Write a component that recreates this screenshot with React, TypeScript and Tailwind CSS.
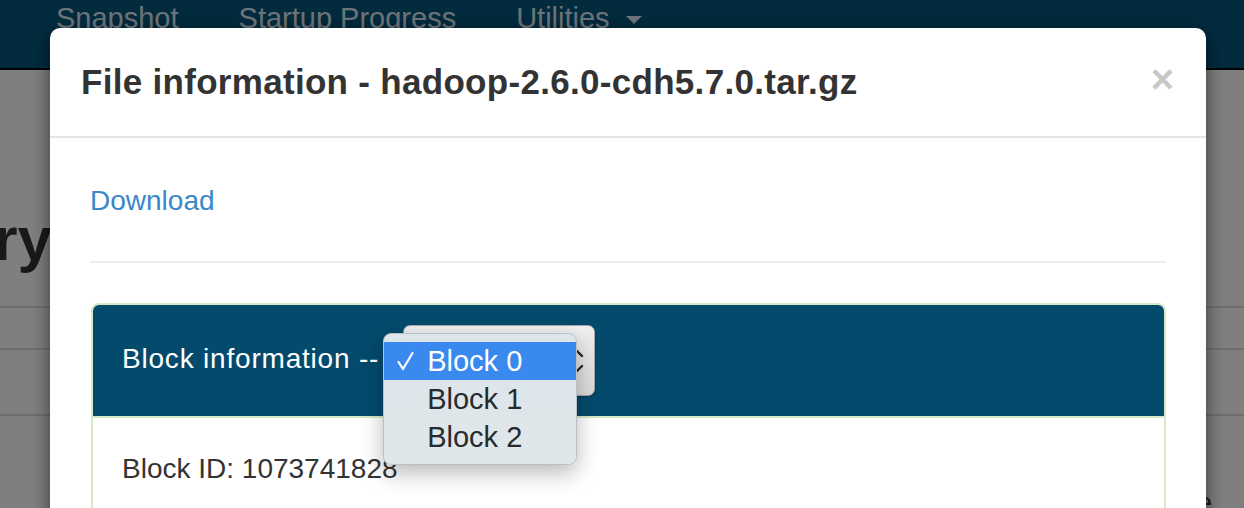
const font = { fontFamily: "'Liberation Sans', Arial, sans-serif" }

function PageBehind() {
  return (
    <div className="absolute inset-0 bg-white">
      <nav className="h-[70px] bg-[#05567c] border-b-2 border-black">
        <ul className="flex pl-[26px] pt-[4px] text-[29px] leading-none text-[#dde8f0]">
          <li className="px-[30px]">Snapshot</li>
          <li className="px-[30px]">Startup Progress</li>
          <li className="px-[30px] flex items-start gap-[16px]">
            Utilities
            <span className="mt-[12px] w-0 h-0 border-l-[8px] border-r-[8px] border-t-[8px] border-l-transparent border-r-transparent border-t-[#dde8f0]" />
          </li>
        </ul>
      </nav>
      <div className="pt-[138px] w-[52px] flex justify-end">
        <h1 className="text-[62px] font-bold leading-none text-[#333] whitespace-nowrap">Browse Directory</h1>
      </div>
      <div className="mt-[36px] border-t-2 border-[#dddddd]" />
      <div className="h-[40px]" />
      <div className="border-t-2 border-[#dddddd]" />
      <div className="h-[64px]" />
      <div className="border-t-2 border-[#dddddd]" />
      <div className="flex justify-end pr-[32px] pt-[66px] text-[28px] text-[#333]">File name</div>
      <div className="absolute inset-0 bg-black/50" />
    </div>
  )
}

function BlockSelect() {
  return (
    <div className="relative ml-[24px] w-[192px] h-[71px]">
      <div className="h-full rounded-[7px] border border-[#a9a9a9] bg-gradient-to-b from-[#f0f0f0] to-[#d9d9d9] shadow-[0_1px_2px_rgba(0,0,0,0.3)] flex items-center justify-end pr-[10px]">
        <svg width="14" height="28" viewBox="0 0 14 28" fill="none" stroke="#222" strokeWidth="2.4" strokeLinecap="round" strokeLinejoin="round">
          <path d="M2 9 L7 4 L12 9" />
          <path d="M2 19 L7 24 L12 19" />
        </svg>
      </div>
      <div className="absolute left-[-20px] top-[8px] w-[194px] rounded-[8px] border border-[#b8c1c6] bg-gradient-to-b from-[#dbe5ea] to-[#e0e7ea] shadow-[0_8px_22px_rgba(0,0,0,0.28)] py-[8px] text-[29px] leading-[38px]">
        <div className="flex items-center h-[38px] bg-[#3a89ef] text-white">
          <svg className="ml-[13px] mr-[13px]" width="17" height="20" viewBox="0 0 17 20" fill="none" stroke="white" strokeWidth="2.2" strokeLinecap="round" strokeLinejoin="round">
            <path d="M1.5 11 L6 18 L15.5 2" />
          </svg>
          <span>Block 0</span>
        </div>
        <div className="h-[38px] pl-[43px] text-[#262b2e]">Block 1</div>
        <div className="h-[38px] pl-[43px] text-[#262b2e]">Block 2</div>
      </div>
    </div>
  )
}

export default function App() {
  return (
    <div className="relative w-[1244px] h-[508px] overflow-hidden" style={font}>
      <PageBehind />

      <div className="absolute left-[50px] top-[28px] w-[1156px] h-[520px] bg-white rounded-[10px] shadow-[0_5px_18px_rgba(0,0,0,0.55)]">
        <div className="h-[110px] border-b-2 border-[#e5e5e5] flex items-center justify-between pl-[31px] pr-[32px]">
          <h4 className="text-[35px] font-bold text-[#333] tracking-[0.3px]">File information - hadoop-2.6.0-cdh5.7.0.tar.gz</h4>
          <span className="text-[40px] font-bold text-[#c8c8c8] leading-none -mt-[6px]">×</span>
        </div>

        <div className="px-[40px]">
          <div className="h-[123px] flex items-center pt-[2px]">
            <a className="text-[28px] text-[#3a87c9]">Download</a>
          </div>
          <hr className="border-t-2 border-[#eeeeee] border-b-0" />

          <div className="mt-[40px] ml-[1px] rounded-t-[8px] border-2 border-[#d6e9c6]">
            <div className="h-[113px] bg-[#034a6c] rounded-t-[6px] border-b-2 border-[#d6e9c6] flex items-center pl-[29px] text-white text-[28px]">
              <span className="tracking-[0.8px] -mt-[3px]">Block information --</span>
              <BlockSelect />
            </div>
            <div className="h-[120px] pl-[29px] pt-[30px] text-[28px] text-[#333]">Block ID: 1073741828</div>
          </div>
        </div>
      </div>
    </div>
  )
}
